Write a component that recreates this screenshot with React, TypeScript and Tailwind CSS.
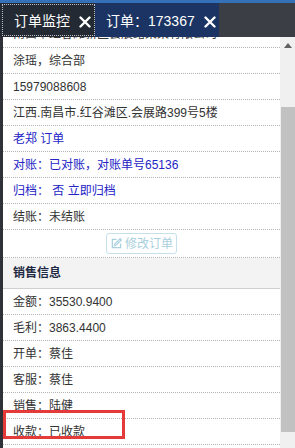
import React from 'react'

const X = () => (
    <svg width="12" height="12" viewBox="0 0 12 12" className="shrink-0">
        <path d="M1.5 1.5 L10.5 10.5 M10.5 1.5 L1.5 10.5" stroke="#fff" strokeWidth="2.4" strokeLinecap="round" />
    </svg>
)

const Row = ({ children, blue }: { children: React.ReactNode; blue?: boolean }) => (
    <div className={'h-[26px] shrink-0 flex items-center pl-[10px] border-b border-dotted border-[#b5b5b5] text-[12px] whitespace-nowrap ' + (blue ? 'text-[#2424c6]' : 'text-[#333333]')}>
        {children}
    </div>
)

export default function App() {
    return (
        <div className="relative w-[295px] h-[448px] overflow-hidden flex flex-col bg-white" style={{ fontFamily: '"Liberation Sans", "Noto Sans CJK SC", sans-serif' }}>
            <div className="h-[3px] shrink-0 bg-[#3471b8]" />
            <div className="h-[34px] shrink-0 flex bg-[#3b3e45]">
                <div className="w-[95px] bg-[#232a34] pl-[2px] py-[1px]">
                    <div className="h-full flex items-center gap-[9px] pl-[11px] pt-[3px] border border-dotted border-white/70 text-white text-[14px]">
                        <span>订单监控</span>
                        <X />
                    </div>
                </div>
                <div className="w-[124px] bg-[#1b3463] flex items-center gap-[9px] pl-[11px] pt-[3px] text-white text-[14px]">
                    <span>订单：173367</span>
                    <X />
                </div>
            </div>
            <div className="flex-1 flex min-h-0">
                <div className="w-[3px] bg-[#2e3138]" />
                <div className="flex-1 overflow-hidden">
                    <div className="flex flex-col">
                        {/* row scrolled mostly out of view */}
                        <div className="h-[11px] shrink-0 overflow-hidden flex items-end pl-[10px] pb-[6px] border-b border-dotted border-[#b5b5b5]">
                            <span className="block text-[12px] leading-[14px] text-[#333333] whitespace-nowrap">南昌市红谷滩新区会展路某某有限公司</span>
                        </div>
                        <Row>涂瑶，综合部</Row>
                        <Row>15979088608</Row>
                        <Row>江西.南昌市.红谷滩区.会展路399号5楼</Row>
                        <Row blue>老郑 订单</Row>
                        <Row blue>对账：已对账，对账单号65136</Row>
                        <Row blue>归档：&nbsp;否 立即归档</Row>
                        <Row>结账：未结账</Row>
                        <div className="h-[28px] shrink-0 flex items-center justify-center border-b border-dotted border-[#b5b5b5]">
                            <div className="h-[21px] flex items-center gap-[2px] px-[3px] border border-[#c5e0ea] rounded-[3px] text-[12px] text-[#a9cfdd]">
                                <svg width="13" height="13" viewBox="0 0 14 14" fill="none" stroke="#a9cfdd" strokeWidth="1.3">
                                    <path d="M7 2.5H2.5v9h9V7" />
                                    <path d="M11 1.8l1.3 1.3-5.6 5.6-1.8.5.5-1.8z" />
                                </svg>
                                <span>修改订单</span>
                            </div>
                        </div>
                        <div className="h-[31px] shrink-0 flex items-center pl-[10px] bg-[#f3f3f3] border-b border-[#cfcfcf] text-[12px] font-bold text-[#1f2a44]">
                            销售信息
                        </div>
                        <Row>金额：35530.9400</Row>
                        <Row>毛利：3863.4400</Row>
                        <Row>开单：蔡佳</Row>
                        <Row>客服：蔡佳</Row>
                        <Row>销售：陆健</Row>
                        <Row>收款：已收款</Row>
                    </div>
                </div>
                <div className="w-[15px] flex flex-col bg-[#f0f0f0]">
                    <div className="h-[17px] flex items-center justify-center">
                        <svg width="8" height="5" viewBox="0 0 8 5"><path d="M0 5L4 0L8 5Z" fill="#606060" /></svg>
                    </div>
                    <div className="mt-[53px] h-[325px] ml-[1px] bg-[#c1c1c1]" />
                </div>
            </div>
            <div className="absolute left-[3px] top-[410px] w-[122px] h-[29px] border-[3px] border-[#e53a3a]" />
        </div>
    )
}
